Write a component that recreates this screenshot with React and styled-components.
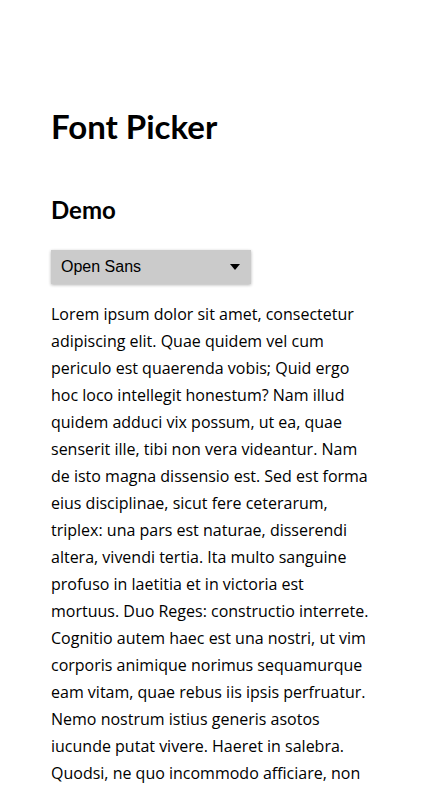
import React, { useState } from "react";
import styled, { createGlobalStyle } from "styled-components";

const GlobalStyle = createGlobalStyle`
  body {
    margin: 0;
    background: #ffffff;
    color: #000000;
  }
`;

const Wrapper = styled.div`
  padding: 103px 51px 0 51px;
`;

const Title = styled.h1`
  margin: 0 0 44px 0;
  font-family: "Lato", "Open Sans", sans-serif;
  font-size: 33px;
  font-weight: 700;
  line-height: 1.4;
`;

const Subtitle = styled.h2`
  margin: 0 0 23px 0;
  font-family: "Lato", "Open Sans", sans-serif;
  font-size: 24px;
  font-weight: 700;
  line-height: 1.4;
`;

const Picker = styled.button`
  display: flex;
  align-items: center;
  justify-content: space-between;
  width: 200px;
  height: 34px;
  padding: 0 11px 0 10px;
  border: none;
  background: #cbcbcb;
  box-shadow: 0 1px 3px rgba(0, 0, 0, 0.3);
  font-family: "Liberation Sans", Arial, sans-serif;
  font-size: 16px;
  color: #000000;
  cursor: pointer;
`;

const Arrow = styled.span`
  width: 0;
  height: 0;
  border-left: 5px solid transparent;
  border-right: 5px solid transparent;
  border-top: 6px solid #000000;
`;

const Text = styled.p`
  margin: 17px 0 0 0;
  font-family: "${(p) => p.font}", sans-serif;
  font-size: 16px;
  line-height: 27px;
`;

const lorem =
  "Lorem ipsum dolor sit amet, consectetur adipiscing elit. Quae quidem vel cum periculo est quaerenda vobis; Quid ergo hoc loco intellegit honestum? Nam illud quidem adduci vix possum, ut ea, quae senserit ille, tibi non vera videantur. Nam de isto magna dissensio est. Sed est forma eius disciplinae, sicut fere ceterarum, triplex: una pars est naturae, disserendi altera, vivendi tertia. Ita multo sanguine profuso in laetitia et in victoria est mortuus. Duo Reges: constructio interrete. Cognitio autem haec est una nostri, ut vim corporis animique norimus sequamurque eam vitam, quae rebus iis ipsis perfruatur. Nemo nostrum istius generis asotos iucunde putat vivere. Haeret in salebra. Quodsi, ne quo incommodo afficiare, non relinques amicum? Tamen a proposito, inquam, aberramus.";

const App = () => {
  const [font] = useState("Open Sans");

  return (
    <Wrapper>
      <GlobalStyle />
      <Title>Font Picker</Title>
      <Subtitle>Demo</Subtitle>
      <Picker>
        <span>{font}</span>
        <Arrow />
      </Picker>
      <Text font={font}>{lorem}</Text>
    </Wrapper>
  );
};

export default App;
